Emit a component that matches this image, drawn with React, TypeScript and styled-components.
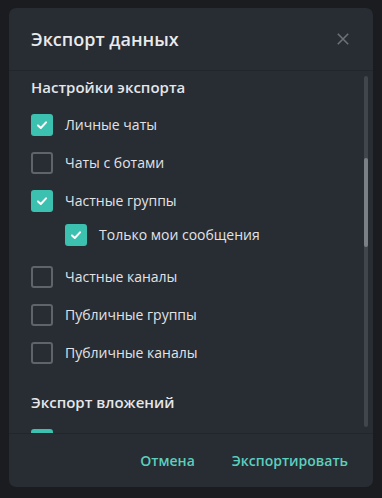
import React, { useState } from "react";
import styled, { createGlobalStyle } from "styled-components";

const Global = createGlobalStyle`
  html, body { margin: 0; padding: 0; background: #1a1c20; }
  body { font-family: "Open Sans", "Noto Sans", sans-serif; -webkit-font-smoothing: antialiased; }
  * { box-sizing: border-box; }
`;

const Screen = styled.div`
  width: 382px;
  height: 498px;
  padding: 8px 9px 11px 9px;
  background: #1a1c20;
`;

const Modal = styled.div`
  width: 364px;
  height: 479px;
  background: #282c33;
  border-radius: 7px;
  display: flex;
  flex-direction: column;
  overflow: hidden;
`;

const Header = styled.div`
  height: 63px;
  flex: none;
  display: flex;
  align-items: center;
  justify-content: space-between;
  padding: 0 24px 1px 22px;
  border-bottom: 1px solid #22252a;
`;

const Title = styled.h1`
  margin: 0;
  font-size: 18px;
  line-height: 24px;
  font-weight: 600;
  color: #e9eaec;
`;

const CloseButton = styled.button`
  width: 12px;
  height: 12px;
  padding: 0;
  border: 0;
  background: none;
  display: flex;
  cursor: pointer;
`;

const Body = styled.div`
  position: relative;
  flex: 1;
  overflow: hidden;
  padding: 6px 0 0 22px;
`;

const Section = styled.section`
  & + & { margin-top: 20px; }
`;

const SectionTitle = styled.h2`
  margin: 0 0 9px 0;
  font-size: 15px;
  line-height: 20px;
  font-weight: 600;
  color: #e4e6e9;
`;

const Row = styled.label<{ $nested?: boolean }>`
  display: flex;
  align-items: center;
  gap: 12px;
  height: 38px;
  padding-left: ${(p) => (p.$nested ? "34px" : "0")};
  margin: ${(p) => (p.$nested ? "-4px 0 4px 0" : "0")};
  cursor: pointer;
`;

const Box = styled.span<{ $checked: boolean }>`
  width: 22px;
  height: 22px;
  flex: none;
  border-radius: 3px;
  display: flex;
  align-items: center;
  justify-content: center;
  background: ${(p) => (p.$checked ? "#3cc0af" : "transparent")};
  border: ${(p) => (p.$checked ? "none" : "2px solid #5f636a")};
`;

const Label = styled.span`
  font-size: 14px;
  line-height: 20px;
  color: #e1e3e6;
`;

const Track = styled.div`
  position: absolute;
  top: 5px;
  right: 5px;
  width: 4px;
  height: 351px;
  border-radius: 2px;
  background: #41454c;
`;

const Thumb = styled.div`
  position: absolute;
  left: 0;
  width: 4px;
  border-radius: 2px;
  background: #7b7f86;
`;

const Footer = styled.div`
  height: 54px;
  flex: none;
  display: flex;
  align-items: center;
  justify-content: flex-end;
  gap: 13px;
  padding: 0 13px 0 0;
  border-top: 1px solid #22252a;
`;

const TextButton = styled.button`
  border: 0;
  background: none;
  padding: 6px 12px;
  font-family: "Open Sans", "Noto Sans", sans-serif;
  font-size: 14px;
  line-height: 20px;
  font-weight: 600;
  color: #5ccfbe;
  cursor: pointer;
`;

const Check = () => (
  <svg width="14" height="14" viewBox="0 0 14 14" fill="none">
    <path d="M3 7.4 L5.8 10 L11 4.3" stroke="#ffffff" strokeWidth="2" strokeLinecap="round" strokeLinejoin="round" />
  </svg>
);

type Item = { label: string; checked: boolean; nested?: boolean };

const initial: Item[] = [
  { label: "Личные чаты", checked: true },
  { label: "Чаты с ботами", checked: false },
  { label: "Частные группы", checked: true },
  { label: "Только мои сообщения", checked: true, nested: true },
  { label: "Частные каналы", checked: false },
  { label: "Публичные группы", checked: false },
  { label: "Публичные каналы", checked: false },
];

export default function App() {
  const [items, setItems] = useState(initial);
  const [media, setMedia] = useState(true);
  const toggle = (i: number) =>
    setItems((prev) => prev.map((it, j) => (j === i ? { ...it, checked: !it.checked } : it)));

  return (
    <>
      <Global />
      <Screen>
        <Modal>
          <Header>
            <Title>Экспорт данных</Title>
            <CloseButton aria-label="Закрыть">
              <svg width="12" height="12" viewBox="0 0 12 12">
                <path d="M0.8 0.8 L11.2 11.2 M11.2 0.8 L0.8 11.2" stroke="#6c7077" strokeWidth="1.6" />
              </svg>
            </CloseButton>
          </Header>
          <Body>
            <Section>
              <SectionTitle>Настройки экспорта</SectionTitle>
              {items.map((it, i) => (
                <Row key={it.label} $nested={it.nested} onClick={() => toggle(i)}>
                  <Box $checked={it.checked}>{it.checked && <Check />}</Box>
                  <Label>{it.label}</Label>
                </Row>
              ))}
            </Section>
            <Section>
              <SectionTitle>Экспорт вложений</SectionTitle>
              <Row onClick={() => setMedia(!media)}>
                <Box $checked={media}>{media && <Check />}</Box>
                <Label>Фотографии</Label>
              </Row>
            </Section>
            <Track>
              <Thumb style={{ top: 82, height: 89 }} />
            </Track>
          </Body>
          <Footer>
            <TextButton>Отмена</TextButton>
            <TextButton>Экспортировать</TextButton>
          </Footer>
        </Modal>
      </Screen>
    </>
  );
}
